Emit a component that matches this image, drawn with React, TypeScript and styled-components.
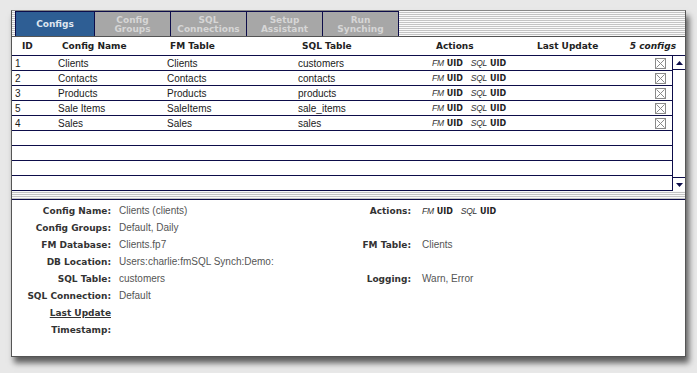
import React from 'react';
import styled, { createGlobalStyle } from 'styled-components';

const NAVY = '#0d0d4a';
const LABEL_FONT = '"DejaVu Sans", Verdana, sans-serif';
const TEXT_FONT = '"Liberation Sans", Arial, sans-serif';

const GlobalStyle = createGlobalStyle`
    html, body {
        margin: 0;
        padding: 0;
        background: #e8e8e8;
    }
    body {
        width: 697px;
        height: 373px;
        overflow: hidden;
    }
`;

// --- layout ---
const Page = styled.div`
    padding: 10px 0 0 11px;
`;

const Window = styled.div`
    width: 675px;
    height: 347px;
    box-sizing: border-box;
    border: 1px solid #555;
    border-top-color: #888;
    background: #fff;
    display: flex;
    flex-direction: column;
    box-shadow: 3px 6px 6px rgba(0, 0, 0, 0.6);
`;

const Striped = styled.div`
    background: repeating-linear-gradient(
        to bottom,
        #fafafa 0px,
        #fafafa 1px,
        #c4c4c4 1px,
        #c4c4c4 2px
    );
`;

const TabBar = styled(Striped)`
    height: 25px;
    display: flex;
    padding-left: 3px;
    border-bottom: 1px solid #555;
`;

const Tab = styled.div<{ $active?: boolean }>`
    width: 77px;
    box-sizing: border-box;
    border: 1px solid ${NAVY};
    border-bottom: none;
    margin-right: -1px;
    background: ${p => (p.$active ? '#2e5e94' : '#a7a7a7')};
    color: ${p => (p.$active ? '#dfe6f0' : '#d6d6d6')};
    font: bold 9px/9px ${LABEL_FONT};
    display: flex;
    align-items: center;
    justify-content: center;
    text-align: center;
    white-space: pre-line;
    padding-top: 1px;
    &:first-child {
        width: 80px;
    }
`;

const Header = styled.div`
    height: 18px;
    display: grid;
    grid-template-columns: 40px 108px 132px 134px 101px 1fr auto;
    align-items: center;
    padding: 0 9px 0 10px;
    border-bottom: 1px solid ${NAVY};
    font: bold 9px ${LABEL_FONT};
    color: #222;
`;

const HeadCell = styled.div<{ $italic?: boolean }>`
    font-style: ${p => (p.$italic ? 'italic' : 'normal')};
    white-space: nowrap;
`;

const ListArea = styled.div`
    display: flex;
    height: 135px;
`;

const Rows = styled.div`
    flex: 1;
    display: flex;
    flex-direction: column;
`;

const Row = styled.div`
    height: 15px;
    box-sizing: border-box;
    border-bottom: 1px solid ${NAVY};
    display: grid;
    grid-template-columns: 43px 109px 131px 134px 101px 1fr 17px;
    align-items: center;
    padding-left: 3px;
    font: 10px ${TEXT_FONT};
    color: #1a1a1a;
`;

const Cell = styled.div`
    white-space: nowrap;
    display: flex;
    align-items: center;
`;

const Actions = styled.span`
    display: inline-flex;
    align-items: baseline;
    color: #222;
`;

const ActionTag = styled.i`
    font: italic 8.5px ${TEXT_FONT};
    letter-spacing: -0.3px;
    color: #333;
    margin-right: 3px;
`;

const ActionUid = styled.b`
    font: bold 8px ${LABEL_FONT};
    margin-right: 8px;
`;

const Scrollbar = styled.div`
    width: 12px;
    border-left: 1px solid ${NAVY};
    display: flex;
    flex-direction: column;
    justify-content: space-between;
`;

const Arrow = styled.div<{ $down?: boolean }>`
    height: 14px;
    box-sizing: border-box;
    border-${p => (p.$down ? 'top' : 'bottom')}: 1px solid ${NAVY};
    display: flex;
    align-items: center;
    justify-content: center;
`;

const ListFooter = styled(Striped)`
    height: 8px;
    border-bottom: 1px solid ${NAVY};
`;

const Detail = styled.div`
    display: grid;
    grid-template-columns: 99px 214px 70px 1fr;
    grid-auto-rows: 17px;
    column-gap: 8px;
    align-items: center;
    padding-top: 2px;
`;

const Label = styled.div<{ $underline?: boolean }>`
    text-align: right;
    font: bold 9px ${LABEL_FONT};
    color: #333;
    white-space: nowrap;
    text-decoration: ${p => (p.$underline ? 'underline' : 'none')};
`;

const Value = styled.div<{ $shift?: number }>`
    font: 10px ${TEXT_FONT};
    color: #555;
    white-space: nowrap;
    padding-left: ${p => p.$shift ?? 0}px;
`;

// --- parts ---
const CheckBox = () => (
    <svg width="11" height="11" viewBox="0 0 11 11">
        <rect x="0.5" y="0.5" width="10" height="10" fill="#fff" stroke="#8a8a8a" />
        <path d="M1.5 1.5 L9.5 9.5 M9.5 1.5 L1.5 9.5" stroke="#8a8a8a" strokeWidth="1" />
    </svg>
);

const Triangle = ({ down }: { down?: boolean }) => (
    <svg width="7" height="4" viewBox="0 0 7 4">
        <path d={down ? 'M0 0 L7 0 L3.5 4 Z' : 'M0 4 L7 4 L3.5 0 Z'} fill={NAVY} />
    </svg>
);

const ActionText = () => (
    <Actions>
        <ActionTag>FM</ActionTag>
        <ActionUid>UID</ActionUid>
        <ActionTag>SQL</ActionTag>
        <ActionUid>UID</ActionUid>
    </Actions>
);

interface Config {
    id: number;
    name: string;
    fmTable: string;
    sqlTable: string;
}

const configs: Config[] = [
    { id: 1, name: 'Clients', fmTable: 'Clients', sqlTable: 'customers' },
    { id: 2, name: 'Contacts', fmTable: 'Contacts', sqlTable: 'contacts' },
    { id: 3, name: 'Products', fmTable: 'Products', sqlTable: 'products' },
    { id: 5, name: 'Sale Items', fmTable: 'SaleItems', sqlTable: 'sale_items' },
    { id: 4, name: 'Sales', fmTable: 'Sales', sqlTable: 'sales' },
];

const tabs = ['Configs', 'Config\nGroups', 'SQL\nConnections', 'Setup\nAssistant', 'Run\nSynching'];

export default function App() {
    const blanks = 9 - configs.length;

    return (
        <>
            <GlobalStyle />
            <Page>
                <Window>
                    <TabBar>
                        {tabs.map((t, i) => (
                            <Tab key={t} $active={i === 0}>{t}</Tab>
                        ))}
                    </TabBar>

                    <Header>
                        <HeadCell>ID</HeadCell>
                        <HeadCell>Config Name</HeadCell>
                        <HeadCell>FM Table</HeadCell>
                        <HeadCell>SQL Table</HeadCell>
                        <HeadCell>Actions</HeadCell>
                        <HeadCell>Last Update</HeadCell>
                        <HeadCell $italic>5 configs</HeadCell>
                    </Header>

                    <ListArea>
                        <Rows>
                            {configs.map(c => (
                                <Row key={c.id}>
                                    <Cell>{c.id}</Cell>
                                    <Cell>{c.name}</Cell>
                                    <Cell>{c.fmTable}</Cell>
                                    <Cell>{c.sqlTable}</Cell>
                                    <Cell><ActionText /></Cell>
                                    <Cell />
                                    <Cell><CheckBox /></Cell>
                                </Row>
                            ))}
                            {Array.from({ length: blanks }).map((_, i) => (
                                <Row key={'b' + i} />
                            ))}
                        </Rows>
                        <Scrollbar>
                            <Arrow><Triangle /></Arrow>
                            <Arrow $down><Triangle down /></Arrow>
                        </Scrollbar>
                    </ListArea>
                    <ListFooter />

                    <Detail>
                        <Label>Config Name:</Label>
                        <Value>Clients (clients)</Value>
                        <Label>Actions:</Label>
                        <Value $shift={3}><ActionText /></Value>

                        <Label>Config Groups:</Label>
                        <Value>Default, Daily</Value>
                        <div />
                        <div />

                        <Label>FM Database:</Label>
                        <Value>Clients.fp7</Value>
                        <Label>FM Table:</Label>
                        <Value $shift={3}>Clients</Value>

                        <Label>DB Location:</Label>
                        <Value>Users:charlie:fmSQL Synch:Demo:</Value>
                        <div />
                        <div />

                        <Label>SQL Table:</Label>
                        <Value>customers</Value>
                        <Label>Logging:</Label>
                        <Value $shift={3}>Warn, Error</Value>

                        <Label>SQL Connection:</Label>
                        <Value>Default</Value>
                        <div />
                        <div />

                        <Label $underline>Last Update</Label>
                        <Value />
                        <div />
                        <div />

                        <Label>Timestamp:</Label>
                        <Value />
                    </Detail>
                </Window>
            </Page>
        </>
    );
}
